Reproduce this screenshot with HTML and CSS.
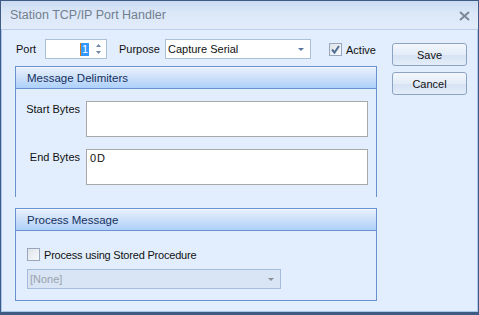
FILE: index.html
```html
<!DOCTYPE html>
<html lang="en">
<head>
    <meta charset="UTF-8">
    <title>Station TCP/IP Port Handler</title>
    <link rel="stylesheet" href="styles.css">
</head>
<body>
    <div class="window">
        <div class="titlebar">
            <span class="title">Station TCP/IP Port Handler</span>
            <svg class="close" width="11" height="10" viewBox="0 0 11 10">
                <path d="M1 1 L10 9 M10 1 L1 9" stroke="#7b8795" stroke-width="2"/>
            </svg>
        </div>
        <div class="client">
            <div class="main">
                <div class="toprow">
                    <span class="label port-label">Port</span>
                    <div class="spin">
                        <span class="caret"></span><span class="sel">1</span>
                        <svg class="spin-arrows" width="7" height="12" viewBox="0 0 7 12">
                            <path d="M3.5 1 L6 4 L1 4 Z" fill="#6f86a6"/>
                            <path d="M1 8 L6 8 L3.5 11 Z" fill="#6f86a6"/>
                        </svg>
                    </div>
                    <span class="label purpose-label">Purpose</span>
                    <div class="combo">
                        <span>Capture Serial</span>
                        <span class="arrow"></span>
                    </div>
                    <label class="check active-check">
                        <span class="box checked">
                            <svg width="11" height="11" viewBox="0 0 11 11">
                                <path d="M2 5.5 L4.5 8.5 L9 2" stroke="#4f6e94" stroke-width="2" fill="none"/>
                            </svg>
                        </span>
                        <span>Active</span>
                    </label>
                </div>

                <div class="group delimiters">
                    <div class="group-head">Message Delimiters</div>
                    <div class="group-body">
                        <div class="field">
                            <span class="field-label">Start Bytes</span>
                            <div class="memo"></div>
                        </div>
                        <div class="field">
                            <span class="field-label">End Bytes</span>
                            <div class="memo">0D</div>
                        </div>
                    </div>
                </div>

                <div class="group process">
                    <div class="group-head">Process Message</div>
                    <div class="group-body">
                        <label class="check">
                            <span class="box"></span>
                            <span>Process using Stored Procedure</span>
                        </label>
                        <div class="combo disabled">
                            <span>[None]</span>
                            <span class="arrow"></span>
                        </div>
                    </div>
                </div>
            </div>
            <div class="buttons">
                <button class="btn">Save</button>
                <button class="btn">Cancel</button>
            </div>
        </div>
    </div>
</body>
</html>
```

FILE: styles.css
```css
body {
    margin: 0;
    padding: 0;
    font-family: 'Liberation Sans', Arial, sans-serif;
    font-size: 11px;
    color: #111;
    background: #e2eefd;
}
.window {
    width: 479px;
    height: 315px;
    box-sizing: border-box;
    border: 1px solid #3d5b83;
    border-bottom-width: 3px;
    display: flex;
    flex-direction: column;
    background: #e2eefd;
}
.titlebar {
    height: 28px;
    flex: none;
    display: flex;
    align-items: center;
    justify-content: space-between;
    padding: 0 8px 0 9px;
    background: linear-gradient(#c9dbf2, #dbe7f8 40%, #e2ecfa);
    border-bottom: 1px solid #b9cfec;
}
.title {
    font-size: 12.5px;
    color: #727f8f;
}
.close {
    margin-top: 1px;
}
.client {
    flex: 1;
    display: flex;
    border: 1px solid #a8c6ee;
    border-top: none;
    padding: 9px 0 0 13px;
    background: #e2eefd;
}
.main {
    width: 362px;
    display: flex;
    flex-direction: column;
}
.toprow {
    display: flex;
    align-items: center;
    height: 20px;
    margin-bottom: 7px;
}
.label {
    white-space: nowrap;
}
.port-label {
    margin-left: 1px;
    width: 29px;
}
.spin {
    width: 62px;
    height: 20px;
    box-sizing: border-box;
    border: 1px solid #abbfd9;
    background: #fff;
    display: flex;
    align-items: center;
    justify-content: flex-end;
    padding-right: 4px;
}
.caret {
    width: 1px;
    height: 13px;
    background: #e07a10;
}
.sel {
    background: #3399ff;
    color: #fff;
    padding: 0 1px;
    line-height: 13px;
    margin-right: 6px;
}
.purpose-label {
    margin-left: 12px;
    width: 46px;
}
.combo {
    width: 146px;
    height: 20px;
    box-sizing: border-box;
    border: 1px solid #abbfd9;
    background: #fff;
    display: flex;
    align-items: center;
    justify-content: space-between;
    padding: 0 6px 0 2px;
}
.arrow {
    width: 0;
    height: 0;
    border-left: 3px solid transparent;
    border-right: 3px solid transparent;
    border-top: 3px solid #56749c;
    margin-top: 1px;
}
.check {
    display: flex;
    align-items: center;
    gap: 4px;
}
.active-check {
    margin-left: 18px;
    margin-top: 1px;
}
.box {
    width: 11px;
    height: 11px;
    border: 1px solid #97a7bd;
    background: linear-gradient(135deg, #dfe4ea, #f7f9fb);
    display: flex;
}
.group {
    border: 1px solid #6993cf;
    display: flex;
    flex-direction: column;
}
.group-head {
    height: 20px;
    line-height: 20px;
    padding-left: 11px;
    font-size: 11.5px;
    color: #15305e;
    background: linear-gradient(#e6f0fc, #c9def9 55%, #add0fb);
    border-top: 1px solid #f4f8fe;
    border-bottom: 1px solid #6993cf;
}
.group-body {
    flex: 1;
    background: #e2eefd;
}
.delimiters {
    height: 131px;
    box-sizing: border-box;
}
.delimiters .group-body {
    padding: 12px 0 0 0;
}
.field {
    display: flex;
    align-items: flex-start;
    margin-bottom: 12px;
}
.field-label {
    width: 64px;
    text-align: right;
    margin-right: 6px;
    padding-top: 2px;
}
.memo {
    width: 282px;
    height: 36px;
    box-sizing: border-box;
    border: 1px solid #a9a9a9;
    background: #fff;
    padding: 2px 3px;
    letter-spacing: 1px;
}
.process {
    margin-top: 11px;
    height: 93px;
    box-sizing: border-box;
}
.process .group-body {
    padding: 17px 0 0 11px;
}
.process .check {
    margin-bottom: 8px;
    letter-spacing: -0.2px;
}
.combo.disabled {
    width: 254px;
    background: #d9e5f5;
    border-color: #a6bcdb;
    color: #9aa2ad;
}
.combo.disabled .arrow {
    border-top-color: #8a8f96;
}
.buttons {
    display: flex;
    flex-direction: column;
    gap: 6px;
    margin-left: 15px;
    padding-top: 4px;
}
.btn {
    width: 75px;
    height: 23px;
    border: 1px solid #8da3c2;
    border-radius: 3px;
    background: linear-gradient(#f3f7fc, #e3ecf8 50%, #d6e3f4 55%, #e4edf9);
    font-family: 'Liberation Sans', Arial, sans-serif;
    font-size: 11px;
    color: #111;
    padding: 0;
}
```
